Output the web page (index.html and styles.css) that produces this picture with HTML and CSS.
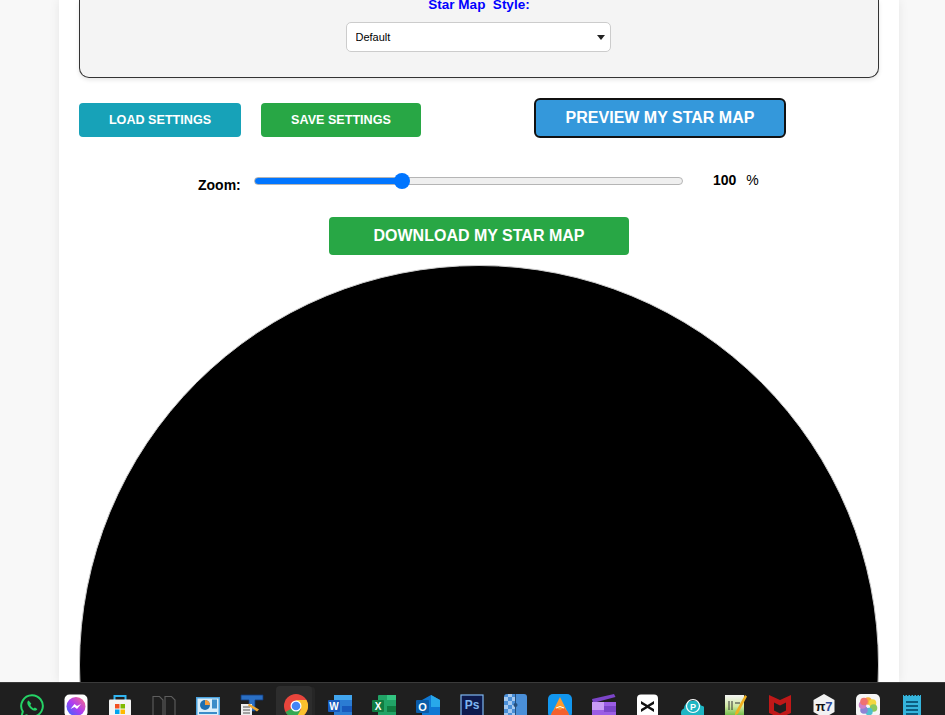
FILE: index.html
```html
<!DOCTYPE html>
<html lang="en">
<head>
    <meta charset="UTF-8">
    <meta name="viewport" content="width=device-width, initial-scale=1.0">
    <title>Star Map</title>
    <link rel="stylesheet" href="styles.css">
</head>
<body>
    <div class="page">
        <main class="container">
            <section class="style-panel">
                <label class="style-label" for="map-style">Star Map &nbsp;Style:</label>
                <div class="select-wrap">
                    <select class="style-select" id="map-style">
                        <option>Default</option>
                    </select>
                </div>
            </section>

            <div class="actions">
                <button class="btn btn-load">LOAD SETTINGS</button>
                <button class="btn btn-save">SAVE SETTINGS</button>
                <button class="btn btn-preview">PREVIEW MY STAR MAP</button>
            </div>

            <div class="zoom-row">
                <label class="zoom-label" for="zoom">Zoom:</label>
                <input class="zoom-range" id="zoom" type="range" min="0" max="295" value="100" style="--fill: 34%">
                <span class="zoom-value">100</span>
                <span class="zoom-unit">%</span>
            </div>

            <div class="download-row">
                <button class="btn btn-download">DOWNLOAD MY STAR MAP</button>
            </div>

            <div class="star-map"></div>
        </main>

        <footer class="taskbar">
            <!-- whatsapp -->
            <div class="task-icon"><svg viewBox="0 0 24 24"><path d="M12 1.200a10.800 10.800 0 0 0-9.200 16.400L1.400 22.800l5.300-1.400A10.800 10.800 0 1 0 12 1.200z" fill="none" stroke="#25d366" stroke-width="2"/><path d="M8.600 6.600c-.8.300-1.600 1.600-1.200 3.200.6 2.600 3.600 6 6.600 6.800 1.600.4 3-.4 3.300-1.500l-2.400-1.700-1.300 1c-1.300-.5-2.800-2.100-3.300-3.300l1-1.300z" fill="#25d366"/></svg></div>
            <!-- messenger -->
            <div class="task-icon"><svg viewBox="0 0 24 24"><rect x="0.500" y="0.500" width="23" height="23" rx="5" fill="#fff"/><defs><linearGradient id="msg" x1="0" y1="1" x2="1" y2="0"><stop offset="0" stop-color="#2f6bff"/><stop offset=".5" stop-color="#b03cf0"/><stop offset="1" stop-color="#ff6f7d"/></linearGradient></defs><circle cx="12" cy="12.500" r="9.500" fill="url(#msg)"/><path d="M6.500 15l4-5 2.500 2 4-2-4 5-2.500-2z" fill="#fff"/></svg></div>
            <!-- store -->
            <div class="task-icon"><svg viewBox="0 0 24 24"><path d="M6.500 7V2h11v5" fill="none" stroke="#30b4f0" stroke-width="2"/><rect x="1" y="5.500" width="22" height="18.500" rx="1" fill="#f4f4f4"/><rect x="7" y="10" width="4.500" height="4.500" fill="#f25022"/><rect x="12.500" y="10" width="4.500" height="4.500" fill="#7fba00"/><rect x="7" y="15.500" width="4.500" height="4.500" fill="#00a4ef"/><rect x="12.500" y="15.500" width="4.500" height="4.500" fill="#ffb900"/></svg></div>
            <!-- files -->
            <div class="task-icon"><svg viewBox="0 0 24 24"><path d="M1 2.500h6.500L11 6v18H1zM13 2.500h6.500L23 6v18H13z" fill="none" stroke="#5e5e5e" stroke-width="1.100"/></svg></div>
            <!-- chart tool -->
            <div class="task-icon"><svg viewBox="0 0 24 24"><rect x="0" y="3" width="24" height="21" fill="#4aa3df"/><rect x="1.500" y="4.500" width="21" height="18" fill="#d9eefa"/><circle cx="9" cy="11" r="5" fill="#1f6fb0"/><path d="M9 11V6a5 5 0 0 1 5 5z" fill="#f39c3d"/><rect x="16" y="5.500" width="5" height="9" fill="#3a8cc8"/><rect x="3" y="18" width="18" height="2" fill="#3a8cc8"/></svg></div>
            <!-- text tool -->
            <div class="task-icon"><svg viewBox="0 0 24 24"><path d="M1 1h22v5h-8v11H9V6H1z" fill="#2a6fc4" stroke="#113a7a" stroke-width=".8"/><rect x="1" y="10" width="11" height="14" fill="#eee"/><path d="M3 13h7M3 16h7M3 19h7" stroke="#555"/><path d="M9 9.500l10 6-2 2-9-6z" fill="#f0a830"/></svg></div>
            <!-- chrome -->
            <div class="task-icon task-active"><svg viewBox="0 0 24 24"><circle cx="12" cy="12" r="12" fill="#e8453c"/><path d="M12 12L1.600 18A12 12 0 0 0 12 24l5.500-6z" fill="#34a853"/><path d="M12 6h10.400A12 12 0 0 1 12 24l5.200-9z" fill="#fbc02d"/><circle cx="12" cy="12" r="5.500" fill="#fff"/><circle cx="12" cy="12" r="4.300" fill="#4285f4"/></svg></div>
            <!-- word -->
            <div class="task-icon"><svg viewBox="0 0 24 24"><rect x="6" y="1" width="18" height="23" rx="1" fill="#2b7cd3"/><rect x="6" y="1" width="18" height="5" fill="#41a5ee"/><rect x="14" y="12" width="10" height="6" fill="#185abd"/><rect x="0" y="6" width="12" height="12" rx="1" fill="#185abd"/><text class="icon-letter" x="6" y="15.500" font-size="10">W</text></svg></div>
            <!-- excel -->
            <div class="task-icon"><svg viewBox="0 0 24 24"><rect x="6" y="1" width="18" height="23" rx="1" fill="#21a366"/><rect x="15" y="1" width="9" height="5" fill="#33c481"/><rect x="15" y="12" width="9" height="6" fill="#107c41"/><rect x="0" y="6" width="12" height="12" rx="1" fill="#107c41"/><text class="icon-letter" x="6" y="15.500" font-size="10">X</text></svg></div>
            <!-- outlook -->
            <div class="task-icon"><svg viewBox="0 0 24 24"><path d="M6 6l9-5 9 5v16H6z" fill="#0f78d4"/><path d="M15 1l9 5v7h-9z" fill="#28a8ea"/><rect x="0" y="6" width="13" height="13" rx="1" fill="#0a5ba8"/><text class="icon-letter" x="6.500" y="16.500" font-size="11">O</text></svg></div>
            <!-- photoshop -->
            <div class="task-icon"><svg viewBox="0 0 24 24"><rect x="1" y="1" width="22" height="23" fill="#0d1a4d" stroke="#7eb6f0" stroke-width="1.200"/><text class="icon-letter ps-letter" x="12" y="15" font-size="12">Ps</text></svg></div>
            <!-- split picture -->
            <div class="task-icon"><svg viewBox="0 0 24 24"><rect x="0" y="0" width="23" height="24" rx="3" fill="#4a8fd8"/><path d="M0 3h4v4H0zM4 7h4v4H4zM0 11h4v4H0zM4 15h4v4H4zM0 19h4v4H0zM4 0h4v3H4zM8 3h3v4H8zM8 11h3v4H8zM8 19h3v4H8z" fill="#a5c8ee"/><path d="M11.500 0v24" stroke="#25507f"/><circle cx="11.500" cy="11" r="2" fill="#25507f"/></svg></div>
            <!-- triangle app -->
            <div class="task-icon"><svg viewBox="0 0 24 24"><rect width="24" height="24" rx="5" fill="#1296ee"/><path d="M12 3l9 18H3z" fill="#ff9a2e"/><path d="M4 18l4-4 4 2 4-2 4 4 1 3H3z" fill="#f4602c"/><path d="M8 14q4-3 8 0" fill="none" stroke="#fff"/></svg></div>
            <!-- clapper -->
            <div class="task-icon"><svg viewBox="0 0 24 24"><path d="M0 5l22-5 1.500 3L1 9z" fill="#7c45c9"/><rect x="0" y="8" width="24" height="16" fill="#9b5de5"/><rect x="0" y="8" width="12" height="8" fill="#c89bf5"/><rect x="12" y="12" width="12" height="6" fill="#7c45c9"/></svg></div>
            <!-- capcut -->
            <div class="task-icon"><svg viewBox="0 0 24 24"><rect x="1" y="0.500" width="21" height="23.500" rx="4" fill="#fff"/><path d="M5 7l6.500 4L18 7v3l-4.500 2.500L18 15v3l-6.500-4L5 18v-3l4.500-2.500L5 10z" fill="#111"/></svg></div>
            <!-- cloud -->
            <div class="task-icon"><svg viewBox="0 0 24 24"><path d="M5 24a5 5 0 0 1-1-9.500A9 9 0 0 1 21 11.500 6 6 0 0 1 19 24z" fill="#1fb6c4"/><circle cx="13" cy="12" r="6.500" fill="none" stroke="#fff" stroke-width="1.200"/><text class="icon-letter" x="13" y="15.500" font-size="9">P</text></svg></div>
            <!-- notepad pencil -->
            <div class="task-icon"><svg viewBox="0 0 24 24"><defs><linearGradient id="pad" x1="0" y1="0" x2="0" y2="1"><stop offset="0" stop-color="#f4f4f4"/><stop offset=".5" stop-color="#cfe8a0"/><stop offset="1" stop-color="#55b030"/></linearGradient></defs><rect x="1" y="1" width="19" height="23" fill="url(#pad)"/><path d="M5 7v9M8 7v9M11 9h5" stroke="#333"/><path d="M21 1l2 1.500-9 17-3 2 .5-3.500z" fill="#f0b020"/></svg></div>
            <!-- mcafee -->
            <div class="task-icon"><svg viewBox="0 0 24 24"><path d="M1 1l11 5 11-5v18l-11 5-11-5z" fill="#c01818"/><path d="M6 8.500l6 3 6-3v8l-6 3-6-3z" fill="#1f1f1f"/></svg></div>
            <!-- pi7 -->
            <div class="task-icon"><svg viewBox="0 0 24 24"><path d="M12 0l10.500 6v12L12 24 1.500 18V6z" fill="#f2f2f2"/><text class="icon-letter pi-letter" x="12" y="17" font-size="13">π<tspan fill="#2a4a9a">7</tspan></text></svg></div>
            <!-- photos -->
            <div class="task-icon"><svg viewBox="0 0 24 24"><rect width="24" height="24" rx="5" fill="#f6f6f6"/><g opacity=".85"><circle cx="12" cy="7" r="3.800" fill="#f9a11b"/><circle cx="16.500" cy="9" r="3.800" fill="#f4d21f"/><circle cx="17.500" cy="14" r="3.800" fill="#7ac143"/><circle cx="13" cy="17.500" r="3.800" fill="#35b6c9"/><circle cx="8" cy="16" r="3.800" fill="#7c6fd0"/><circle cx="6.500" cy="11" r="3.800" fill="#c66bc0"/><circle cx="8" cy="7.500" r="3.800" fill="#ee5a5a"/></g></svg></div>
            <!-- notes -->
            <div class="task-icon"><svg viewBox="0 0 24 24"><rect x="3" y="1" width="18" height="23" fill="#35b4dc"/><path d="M4 1.500h16" stroke="#1d2a30" stroke-dasharray="1.500 1.500"/><path d="M6 8h12M6 12h12M6 16h12M6 20h12" stroke="#0d5d80" stroke-width="1.800"/></svg></div>
        </footer>
    </div>
</body>
</html>
```

FILE: styles.css
```css
*{
    margin: 0px;
    padding: 0px;
    box-sizing: border-box;
}
html, body{
    height: 100%;
    overflow: hidden;
}
body{
    background: #f8f8f8;
    font-family: "Liberation Sans", Arial, sans-serif;
    color: #000;
}
.page{
    height: 715px;
    display: flex;
    flex-direction: column;
}
.container{
    flex: 1;
    min-height: 0;
    overflow: hidden;
    width: 840px;
    margin-left: 59px;
    padding: 0px 20px;
    background: #fff;
    box-shadow: 0px 0px 10px rgba(0, 0, 0, .08);
}

/* painel do estilo, cortado pelo topo da janela */
.style-panel{
    height: 78px;
    background: #f4f4f4;
    border: 1px solid #333;
    border-top: none;
    border-radius: 0px 0px 10px 10px;
    box-shadow: 0px 2px 4px rgba(0, 0, 0, .1);
    display: flex;
    flex-direction: column;
    align-items: center;
}
.style-label{
    height: 21px;
    margin-top: -3px;
    font-size: 13.5px;
    font-weight: bold;
    color: #00f;
    line-height: 16px;
}
.select-wrap{
    position: relative;
    width: 265px;
    height: 30px;
    margin-top: 4px;
    margin-right: 2px;
}
.select-wrap::after{
    content: "";
    position: absolute;
    right: 6px;
    top: 13px;
    border-left: 4px solid transparent;
    border-right: 4px solid transparent;
    border-top: 5px solid #222;
}
.style-select{
    -webkit-appearance: none;
    appearance: none;
    display: block;
    width: 100%;
    height: 100%;
    padding-left: 9px;
    border: 1px solid #ccc;
    border-radius: 5px;
    background: #fff;
    font-family: inherit;
    font-size: 11px;
    color: #000;
}

.actions{
    display: flex;
    align-items: flex-start;
    margin-top: 20px;
}
.btn{
    border: none;
    border-radius: 4px;
    color: #fff;
    font-family: inherit;
    font-weight: bold;
    cursor: pointer;
}
.btn-load{
    width: 162px;
    height: 34px;
    margin-top: 5px;
    padding-bottom: 1px;
    background: #17a2b8;
    font-size: 12.6px;
}
.btn-save{
    width: 160px;
    height: 34px;
    margin-top: 5px;
    margin-left: 20px;
    padding-bottom: 1px;
    background: #28a745;
    font-size: 12.6px;
}
.btn-preview{
    width: 252px;
    height: 40px;
    margin-left: 113px;
    padding-bottom: 1px;
    background: #3498db;
    border: 2px solid #111;
    border-radius: 6px;
    font-size: 16px;
}

.zoom-row{
    display: flex;
    align-items: flex-start;
    height: 30px;
    margin-top: 33px;
    padding-left: 119px;
    font-size: 14px;
}
.zoom-label{
    width: 56px;
    margin-top: 6px;
    font-weight: bold;
}
.zoom-range{
    -webkit-appearance: none;
    appearance: none;
    width: 429px;
    height: 16px;
    margin-top: 2px;
    margin-right: 1px;
    background: transparent;
}
.zoom-range::-webkit-slider-runnable-track{
    height: 8px;
    border: 1px solid #b5b5b5;
    border-radius: 4px;
    background: linear-gradient(to right, #0075ff var(--fill), #efefef var(--fill));
}
.zoom-range::-webkit-slider-thumb{
    -webkit-appearance: none;
    width: 16px;
    height: 16px;
    margin-top: -5px;
    border-radius: 50%;
    background: #0075ff;
}
.zoom-value{
    margin-left: 29px;
    margin-top: 1px;
    font-weight: bold;
}
.zoom-unit{
    margin-left: 10px;
    margin-top: 1px;
}

.download-row{
    display: flex;
    justify-content: center;
    margin-top: 16px;
}
.btn-download{
    width: 300px;
    height: 38px;
    padding-bottom: 1px;
    background: #28a745;
    font-size: 16px;
}

.star-map{
    width: 800px;
    height: 800px;
    margin-top: 10px;
    border: 1px solid #ccc;
    border-radius: 50%;
    background: #000;
}

/* barra de tarefas */
.taskbar{
    flex: none;
    height: 33px;
    overflow: hidden;
    display: flex;
    gap: 20px;
    padding: 11px 0px 0px 20px;
    background: #1f1f1f;
    border-top: 1px solid #3a3a3a;
}
.task-icon{
    flex: none;
    position: relative;
    width: 24px;
    height: 24px;
}
.task-icon svg{
    display: block;
    width: 24px;
    height: 24px;
}
.task-active::before{
    content: "";
    position: absolute;
    left: -8px;
    top: -8px;
    width: 36px;
    height: 40px;
    border-radius: 4px;
    background: #2d2d2d;
    box-shadow: 4px 0px 0px -1px #262626;
}
.task-active svg{
    position: relative;
}
.icon-letter{
    fill: #fff;
    font-family: "Liberation Sans", Arial, sans-serif;
    font-weight: bold;
    text-anchor: middle;
}
.ps-letter{
    fill: #7eb6f0;
}
.pi-letter{
    fill: #111;
}
```
